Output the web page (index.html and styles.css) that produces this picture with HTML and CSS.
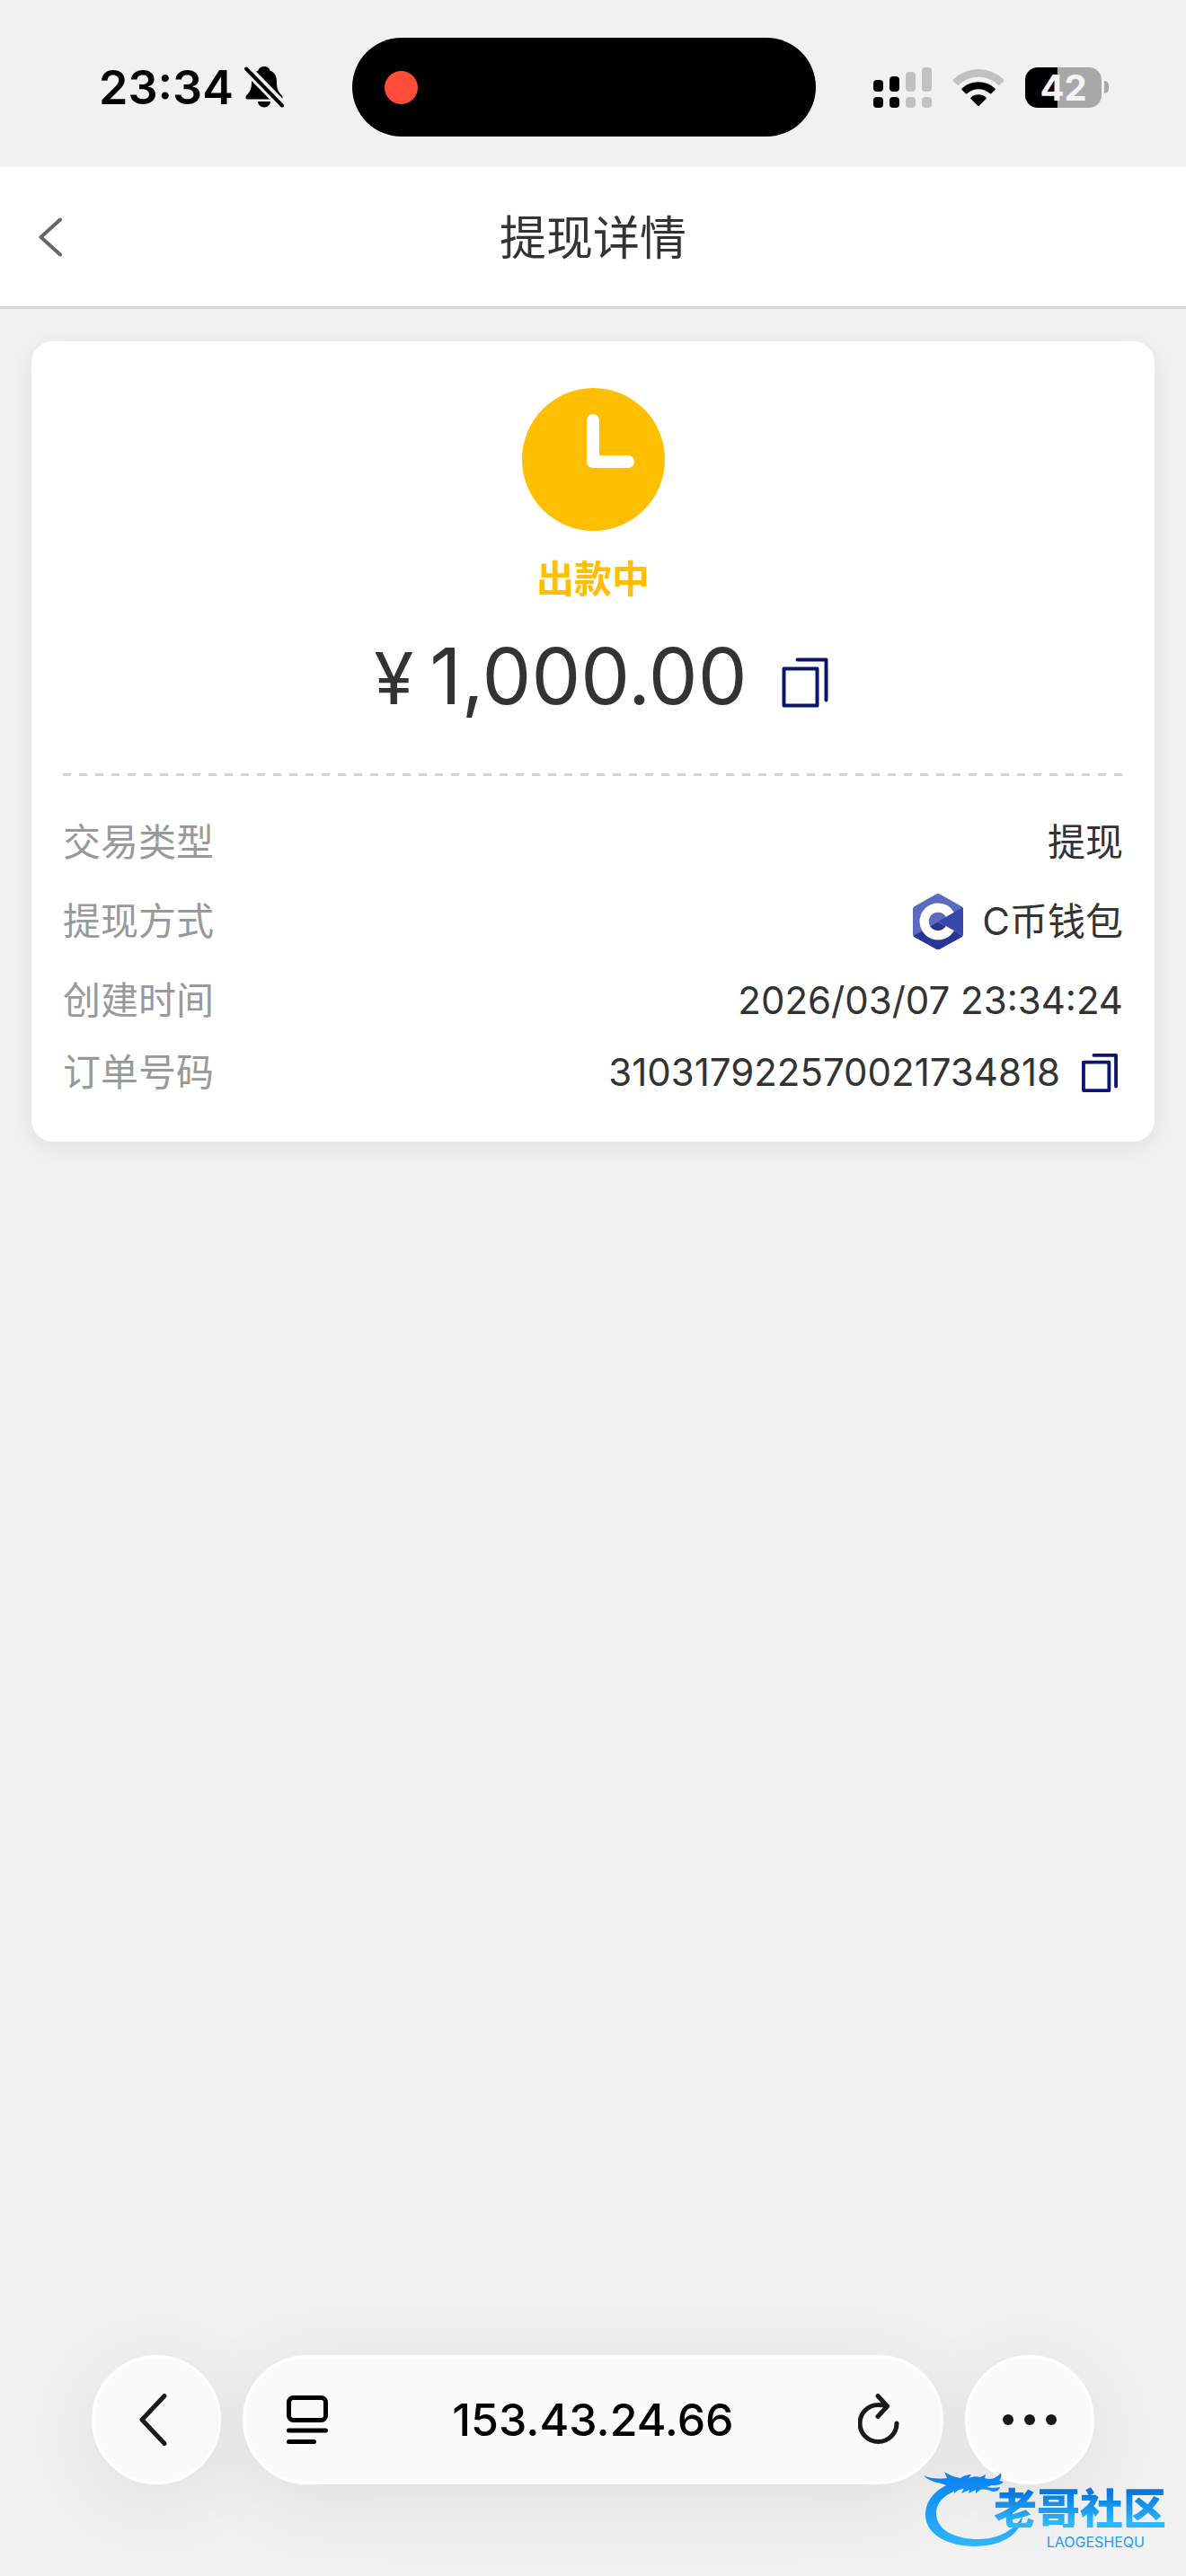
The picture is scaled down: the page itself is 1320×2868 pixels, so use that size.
FILE: index.html
```html
<!DOCTYPE html>
<html lang="zh-CN">
<head>
    <meta charset="UTF-8">
    <meta name="viewport" content="width=device-width, initial-scale=1.0">
    <title>提现详情</title>
    <link rel="stylesheet" href="styles.css">
</head>
<body>
    <div class="status-bar">
        <div class="status-left">
            <span class="time">23:34</span>
            <svg class="bell" width="44" height="48" viewBox="0 0 44 48">
                <path d="M22 1c-4 0-6 2.300-6.500 4.500C9.500 8 8 13 8 18c0 8-1.500 11-5.500 15C.5 35.500 1.500 37.500 4 37.500h36c2.500 0 3.500-2 1.500-4.500C37.500 29 36 26 36 18c0-5-1.500-10-7.500-12.500C28 3.300 26 1 22 1z"/>
                <path d="M15 40h14c0 3.500-3 6.500-7 6.500s-7-3-7-6.500z"/>
                <path class="bell-gap" d="M2 3l40 41"/>
                <path class="bell-slash" d="M2 3.500l40 41"/>
            </svg>
        </div>
        <div class="island"><span class="rec-dot"></span></div>
        <div class="status-right">
            <svg width="65" height="45" viewBox="0 0 65 45">
                <rect x="0" y="14" width="11" height="13" rx="4"/>
                <rect x="18" y="10" width="11" height="17" rx="4"/>
                <rect class="dim" x="36" y="5" width="11" height="22" rx="4"/>
                <rect class="dim" x="54" y="0" width="11" height="27" rx="4"/>
                <rect x="0" y="33" width="11" height="12" rx="4"/>
                <rect x="18" y="33" width="11" height="12" rx="4"/>
                <rect class="dim" x="36" y="33" width="11" height="12" rx="4"/>
                <rect class="dim" x="54" y="33" width="11" height="12" rx="4"/>
            </svg>
            <svg width="58" height="43" viewBox="0 0 58 43">
                <path class="dim" d="M1 12.500a40 40 0 0 1 56 0q1 1 0 2l-4.500 4q-1 .5-1.500 0a32 32 0 0 0-44 0q-.5.5-1.500 0l-4.500-4q-1-1 0-2z"/>
                <path d="M10.500 22.500a27 27 0 0 1 37 0q.7.800 0 1.600l-4 4q-1 .7-2 0a18.500 18.500 0 0 0-25 0q-1 .7-2 0l-4-4q-.7-.8 0-1.600z"/>
                <path d="M20.500 32.500a13 13 0 0 1 17 0q.5.800 0 1.500l-7.500 7.500q-1 1-2 0l-7.500-7.500q-.5-.7 0-1.500z"/>
            </svg>
            <div class="battery">
                <div class="battery-body">42</div>
                <div class="battery-cap"></div>
            </div>
        </div>
    </div>

    <header class="page-header">
        <button type="button" class="back-btn" aria-label="返回">
            <svg width="28" height="44" viewBox="0 0 28 44"><path d="M25 2.500L3.500 22 25 41.500"/></svg>
        </button>
        <h1>提现详情</h1>
    </header>

    <main class="content">
        <section class="card">
            <div class="summary">
                <svg class="clock" width="159" height="159" viewBox="0 0 159 159">
                    <circle cx="79.500" cy="79.500" r="79.500"/>
                    <path d="M79 36v46h39"/>
                </svg>
                <p class="state">出款中</p>
                <div class="amount">
                    <span class="money"><span class="currency">¥</span>1,000.00</span>
                    <button type="button" class="copy-btn" aria-label="复制金额">
                        <svg width="52" height="56" viewBox="0 0 52 56"><path d="M2.500 12.500h37v41h-37zM17.500 2.500h32v45"/></svg>
                    </button>
                </div>
            </div>
            <div class="divider"></div>
            <dl class="details">
                <div class="row">
                    <dt>交易类型</dt>
                    <dd>提现</dd>
                </div>
                <div class="row row-wallet">
                    <dt>提现方式</dt>
                    <dd>
                        <svg class="wallet" width="58" height="64" viewBox="0 0 58 64">
                            <path fill="#5c6bc0" d="M26.500 1.700q2.500-1.400 5 0L55 15q2 1 2 3v14L29 32 1.500 48.500Q1 47.500 1 46V18q0-2 2-3z"/>
                            <path fill="#283593" d="M1.500 48L29 32l27.500 16q-.5 1-1.500 1.600L31.500 62.500q-2.500 1.400-5 0L3 49.500Q2 49 1.500 48z"/>
                            <path fill="#3949ab" d="M29 32L56 16.200q1 .8 1 2.300v27.500q0 1.500-.7 2.300z"/>
                            <path fill="#fff" d="M29 11.500a20.500 20.500 0 1 0 17.800 30.700l-9-5.200a10.200 10.200 0 1 1 0-10.200l9-5.100A20.500 20.500 0 0 0 29 11.500z"/>
                        </svg>
                        C币钱包
                    </dd>
                </div>
                <div class="row">
                    <dt>创建时间</dt>
                    <dd>2026/03/07 23:34:24</dd>
                </div>
                <div class="row">
                    <dt>订单号码</dt>
                    <dd>
                        310317922570021734818
                        <button type="button" class="copy-btn copy-small" aria-label="复制订单号码">
                            <svg width="40" height="43" viewBox="0 0 52 56"><path d="M2.500 12.500h37v41h-37zM17.500 2.500h32v45"/></svg>
                        </button>
                    </dd>
                </div>
            </dl>
        </section>
    </main>

    <nav class="browser-bar">
        <button type="button" class="round-btn" aria-label="后退">
            <svg width="40" height="58" viewBox="0 0 40 58"><path d="M29 2.500L4 29l25 26.500"/></svg>
        </button>
        <div class="url-bar">
            <button type="button" class="icon-btn" aria-label="页面菜单">
                <svg class="reader" width="46" height="56" viewBox="0 0 46 56">
                    <rect x="2.500" y="3.500" width="41" height="25" rx="5"/>
                    <path d="M2.500 40h41M2.500 52.500h28"/>
                </svg>
            </button>
            <input type="text" class="url" value="153.43.24.66" aria-label="网址">
            <button type="button" class="icon-btn" aria-label="刷新">
                <svg width="46" height="58" viewBox="0 0 46 58">
                    <path d="M43 33a20.500 20.500 0 1 1-20.500-20.500q5 0 10 1.500M22 2.500l10.500 11.500L22 25.500"/>
                </svg>
            </button>
        </div>
        <button type="button" class="round-btn" aria-label="更多">
            <svg class="dots" width="60" height="12" viewBox="0 0 60 12">
                <circle cx="6" cy="6" r="6"/><circle cx="30" cy="6" r="6"/><circle cx="54" cy="6" r="6"/>
            </svg>
        </button>
    </nav>

    <div class="watermark">
        <svg class="dragon" width="112" height="90" viewBox="0 0 112 90">
            <defs>
                <linearGradient id="blue" gradientUnits="userSpaceOnUse" x1="0" y1="5" x2="0" y2="88">
                    <stop offset="0" stop-color="#0a80f0"/>
                    <stop offset="1" stop-color="#2eb8fb"/>
                </linearGradient>
            </defs>
            <path fill="url(#blue)" d="M42 14C18 18 2 33 2 52c0 21 24 35 55 35 30 0 52-14 53-34-8 15-26 26-49 26-26 0-47-10-47-29 0-14 14-25 34-28z"/>
            <path fill="url(#blue)" d="M0 8c8 4 16 4 26 3l-3-7c6 4 12 6 18 7 4-3 8-4 12-4l-3 4c5-2 9-2 13-1l6-3-1 4c7 2 12 1 18-6 1 4 0 7-2 9l5 1c-3 4-8 4-13 4l-6 2c6 1 10 1 15 0-1 4-4 5-8 5-5-2-9-3-14-2l-5 4v-4l-8 4 1-4-9 4 3-6c-5 1-8 3-11 6 0-4 1-6 3-8l-8 1c-10-6-21-4-29-13z"/>
        </svg>
        <span class="mark-name">老哥社区</span>
        <span class="mark-sub">LAOGESHEQU</span>
    </div>
</body>
</html>
```

FILE: styles.css
```css
* {
    box-sizing: border-box;
}

body {
    margin: 0;
    min-height: 100vh;
    display: flex;
    flex-direction: column;
    position: relative;
    background-color: #f1f1f1;
    color: #333;
    font-family: Inter, "Noto Sans CJK SC", sans-serif;
    font-size: 42px;
}

button {
    display: flex;
    flex-shrink: 0;
    align-items: center;
    justify-content: center;
    padding: 0;
    border: none;
    background: none;
    cursor: pointer;
}

svg {
    display: block;
    flex-shrink: 0;
}

/* status bar */
.status-bar {
    display: flex;
    align-items: center;
    height: 186px;
    padding: 8px 86px 0 110px;
    color: #000;
}

.status-left {
    display: flex;
    align-items: center;
    gap: 12px;
    width: 206px;
}

.time {
    font-size: 52px;
    font-weight: 600;
}

.bell-gap,
.bell-slash {
    fill: none;
    stroke: #000;
    stroke-width: 4px;
    stroke-linecap: round;
}

.bell-gap {
    stroke: #f1f1f1;
    stroke-width: 11px;
}

.island {
    display: flex;
    align-items: center;
    width: 516px;
    height: 110px;
    margin-left: 76px;
    padding-left: 36px;
    border-radius: 55px;
    background-color: #000;
}

.rec-dot {
    width: 37px;
    height: 37px;
    border-radius: 50%;
    background-color: #ff4d3a;
}

.status-right {
    display: flex;
    align-items: center;
    gap: 23px;
    margin-left: auto;
}

.dim {
    fill: #c1c1c1;
}

.battery {
    display: flex;
    align-items: center;
    gap: 3px;
}

.battery-body {
    width: 85px;
    height: 45px;
    border-radius: 14px;
    background: linear-gradient(to right, #000 42%, #a8a8a8 42%);
    color: #f4f4f4;
    font-size: 40px;
    font-weight: 700;
    line-height: 45px;
    text-align: center;
}

.battery-cap {
    width: 5px;
    height: 14px;
    border-radius: 0 5px 5px 0;
    background-color: #a8a8a8;
}

/* page header */
.page-header {
    display: grid;
    grid-template-columns: 112px 1fr 112px;
    align-items: center;
    height: 158px;
    border-bottom: 3px solid #d6d6d6;
    background-color: #fff;
}

.page-header h1 {
    margin: 0;
    padding-bottom: 4px;
    font-size: 52px;
    font-weight: 400;
    text-align: center;
}

.back-btn {
    height: 100px;
}

.back-btn svg {
    fill: none;
    stroke: #666;
    stroke-width: 4px;
    stroke-linecap: round;
    stroke-linejoin: round;
}

/* card */
.content {
    flex: 1;
    padding: 36px 35px;
}

.card {
    padding: 52px 35px 51px;
    border-radius: 24px;
    background-color: #fff;
    box-shadow: 0 6px 30px rgba(0, 0, 0, 0.07);
}

.summary {
    display: flex;
    flex-direction: column;
    align-items: center;
}

.clock circle {
    fill: #ffbf00;
}

.clock path {
    fill: none;
    stroke: #fff;
    stroke-width: 14px;
    stroke-linecap: round;
    stroke-linejoin: round;
}

.state {
    margin: 24px 0 28px;
    color: #ffbf00;
    font-weight: 700;
    line-height: 60px;
}

.amount {
    display: flex;
    align-items: center;
    gap: 38px;
    margin-bottom: 58px;
}

.money {
    font-size: 87px;
    line-height: 100px;
}

.currency {
    margin: 0 18px;
    font-size: 80px;
    line-height: 80px;
}

.copy-btn svg {
    margin-top: 14px;
    fill: none;
    stroke: #0b176f;
    stroke-width: 4px;
    stroke-linejoin: round;
    stroke-linecap: round;
}

.copy-small {
    margin: 0 6px 0 24px;
}

.copy-small svg {
    margin-top: 0;
    stroke-width: 5px;
}

.divider {
    height: 3px;
    background: repeating-linear-gradient(to right, #d4d4d4 0, #d4d4d4 9px, transparent 9px, transparent 18px);
}

.details {
    display: flex;
    flex-direction: column;
    gap: 28px;
    margin: 48px 0 0;
}

.row {
    display: flex;
    align-items: center;
    justify-content: space-between;
    height: 52px;
    line-height: 52px;
}

.row-wallet {
    height: 68px;
}

.row dt {
    color: #999;
}

.row dd {
    display: flex;
    align-items: center;
    margin: 0;
}

.wallet {
    margin-right: 20px;
}

/* browser bar */
.browser-bar {
    display: flex;
    gap: 24px;
    padding: 0 102px 102px;
}

.round-btn,
.url-bar {
    height: 144px;
    border: 3px solid #fff;
    border-radius: 72px;
    background-color: #fbfbfb;
    box-shadow: 0 16px 90px rgba(0, 0, 0, 0.08);
}

.round-btn {
    width: 144px;
}

.url-bar {
    display: flex;
    flex: 1;
    align-items: center;
    min-width: 0;
    padding: 0 46px;
}

.url {
    flex: 1;
    min-width: 0;
    border: none;
    background: none;
    color: #000;
    font-family: inherit;
    font-size: 50px;
    font-weight: 500;
    text-align: center;
}

.browser-bar svg {
    fill: none;
    stroke: #1a1a1a;
    stroke-width: 5px;
    stroke-linecap: round;
    stroke-linejoin: round;
}

.browser-bar .reader {
    stroke: #000;
}

.browser-bar .dots {
    fill: #1a1a1a;
    stroke: none;
}

/* community mark over the bottom corner */
.watermark {
    position: absolute;
    right: 20px;
    bottom: 30px;
    width: 272px;
    height: 90px;
    pointer-events: none;
}

.mark-name,
.mark-sub {
    position: absolute;
    white-space: nowrap;
}

.mark-name {
    right: 2px;
    bottom: 24px;
    background: linear-gradient(to bottom, #0878e0 20%, #2eb8fb 90%);
    -webkit-background-clip: text;
    background-clip: text;
    color: transparent;
    font-family: "Noto Sans CJK SC", sans-serif;
    font-size: 48px;
    font-weight: 900;
    line-height: 48px;
}

.mark-sub {
    right: 26px;
    bottom: 0;
    color: #1e9cf0;
    font-size: 16px;
    line-height: 16px;
}
```
